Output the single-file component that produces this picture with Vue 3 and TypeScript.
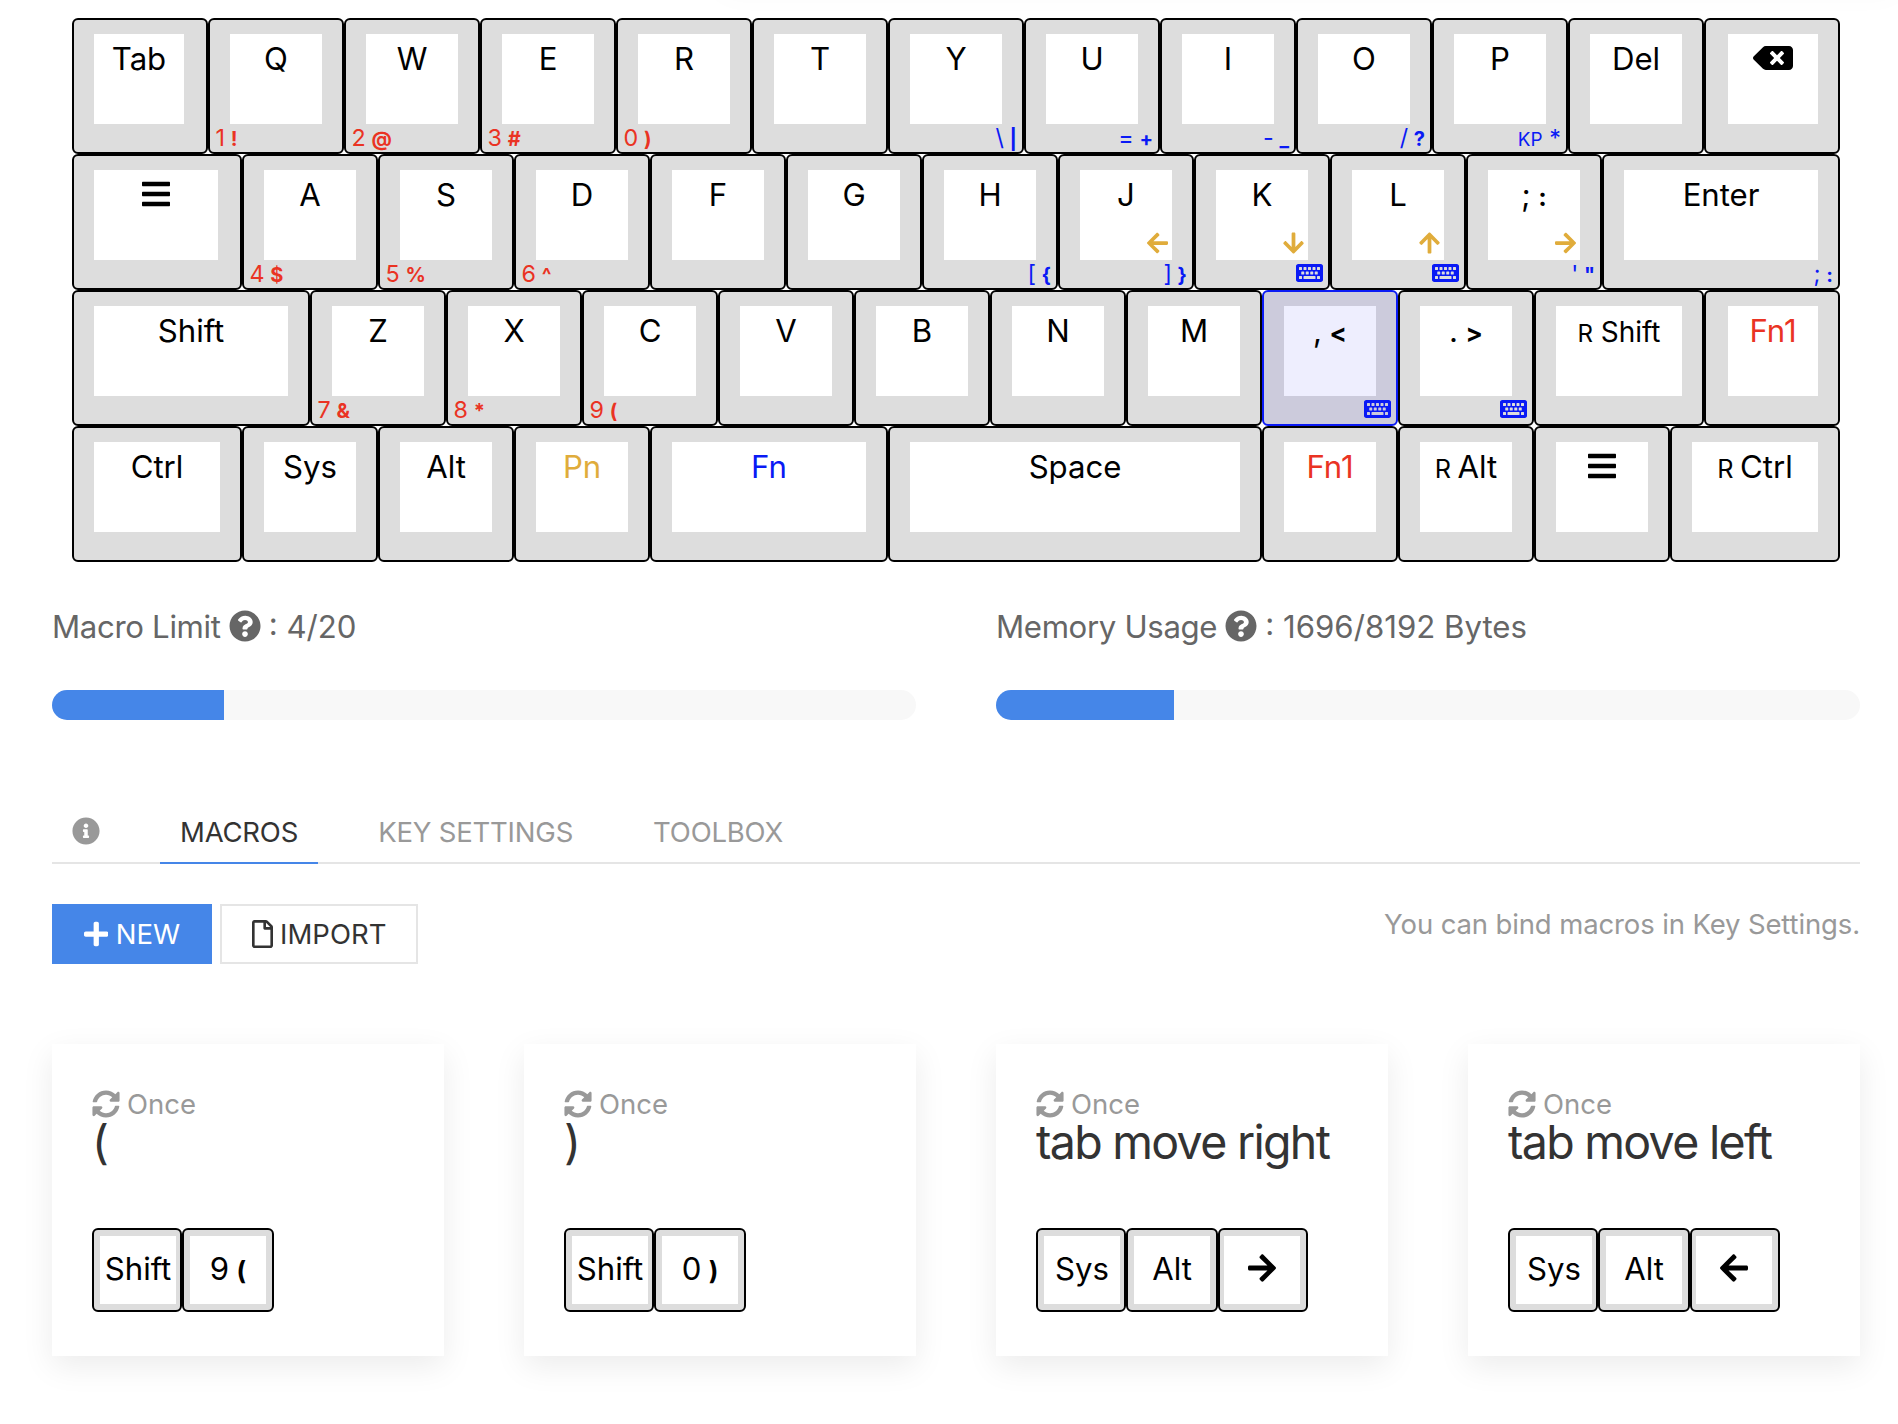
<script setup lang="ts">
interface Icon { w: number; d: string }
interface Legend { t?: string; s?: string; pre?: string; icon?: string; mid?: boolean }
interface Key { u?: number; m: Legend; fn1?: Legend; fn?: Legend; pn?: string; tone?: string; sel?: boolean; edge?: string }

const block = (x: number, y: number, w: number) =>
  `M${x + 12} ${y}a12 12 0 0 0-12 12v40a12 12 0 0 0 12 12h${w - 24}a12 12 0 0 0 12-12v-40a12 12 0 0 0-12-12z`

const keyboardPath =
  'M528 448H48c-26.51 0-48-21.49-48-48V112c0-26.51 21.49-48 48-48h480c26.51 0 48 21.49 48 48v288c0 26.51-21.49 48-48 48z' +
  [64, 160, 256, 352, 448].map(x => block(x, 128, 64)).join('') +
  [112, 208, 304, 400].map(x => block(x, 224, 64)).join('') +
  block(64, 320, 64) + block(160, 320, 256) + block(448, 320, 64)

const icons: Record<string, Icon> = {
  left: { w: 448, d: 'M257.5 445.1l-22.2 22.2c-9.4 9.4-24.6 9.4-33.9 0L7 273c-9.4-9.4-9.4-24.6 0-33.9L201.4 44.7c9.4-9.4 24.6-9.4 33.9 0l22.2 22.2c9.5 9.5 9.3 25-.4 34.3L136.6 216H424c13.3 0 24 10.7 24 24v32c0 13.3-10.7 24-24 24H136.6l120.5 114.8c9.8 9.3 10 24.8.4 34.3z' },
  right: { w: 448, d: 'M190.5 66.9l22.2-22.2c9.4-9.4 24.6-9.4 33.9 0L441 239c9.4 9.4 9.4 24.6 0 33.9L246.6 467.3c-9.4 9.4-24.6 9.4-33.9 0l-22.2-22.2c-9.5-9.5-9.3-25 .4-34.3L311.4 296H24c-13.3 0-24-10.7-24-24v-32c0-13.3 10.7-24 24-24h287.4L190.9 101.2c-9.8-9.3-10-24.8-.4-34.3z' },
  up: { w: 448, d: 'M34.9 289.5l-22.2-22.2c-9.4-9.4-9.4-24.6 0-33.9L207 39c9.4-9.4 24.6-9.4 33.9 0l194.3 194.3c9.4 9.4 9.4 24.6 0 33.9L413 289.4c-9.5 9.5-25 9.3-34.3-.4L264 168.6V456c0 13.3-10.7 24-24 24h-32c-13.3 0-24-10.7-24-24V168.6L69.2 289.1c-9.3 9.8-24.8 10-34.3.4z' },
  down: { w: 448, d: 'M413.1 222.5l22.2 22.2c9.4 9.4 9.4 24.6 0 33.9L241 473c-9.4 9.4-24.6 9.4-33.9 0L12.7 278.6c-9.4-9.4-9.4-24.6 0-33.9l22.2-22.2c9.5-9.4 25-9.3 34.3.4L184 343.4V56c0-13.3 10.7-24 24-24h32c13.3 0 24 10.7 24 24v287.4l114.8-120.5c9.3-9.8 24.8-10 34.3-.4z' },
  bars: { w: 448, d: 'M16 132h416c8.8 0 16-7.2 16-16V76c0-8.8-7.2-16-16-16H16C7.2 60 0 67.2 0 76v40c0 8.8 7.2 16 16 16zm0 160h416c8.8 0 16-7.2 16-16v-40c0-8.8-7.2-16-16-16H16c-8.8 0-16 7.2-16 16v40c0 8.8 7.2 16 16 16zm0 160h416c8.8 0 16-7.2 16-16v-40c0-8.8-7.2-16-16-16H16c-8.8 0-16 7.2-16 16v40c0 8.8 7.2 16 16 16z' },
  backspace: { w: 640, d: 'M576 64H205.26A63.97 63.97 0 0 0 160 82.75L9.37 233.37c-12.5 12.5-12.5 32.76 0 45.25L160 429.25c12 12 28.28 18.75 45.25 18.75H576c35.35 0 64-28.65 64-64V128c0-35.35-28.65-64-64-64zm-84.69 254.06c6.25 6.25 6.25 16.38 0 22.63l-22.62 22.62c-6.25 6.25-16.38 6.25-22.63 0L384 301.25l-62.06 62.06c-6.25 6.25-16.38 6.25-22.63 0l-22.62-22.62c-6.25-6.25-6.25-16.38 0-22.63L338.75 256l-62.06-62.06c-6.25-6.25-6.25-16.38 0-22.63l22.62-22.62c6.25-6.25 16.38-6.25 22.63 0L384 210.75l62.06-62.06c6.25-6.25 16.38-6.25 22.63 0l22.62 22.62c6.25 6.25 6.25 16.38 0 22.63L429.25 256l62.06 62.06z' },
  keyboard: { w: 576, d: keyboardPath },
  question: { w: 512, d: 'M504 256c0 136.997-111.043 248-248 248S8 392.997 8 256C8 119.083 119.043 8 256 8s248 111.083 248 248zM262.655 90c-54.497 0-89.255 22.957-116.549 63.758-3.536 5.286-2.353 12.415 2.715 16.258l34.699 26.31c5.205 3.947 12.621 3.008 16.665-2.122 17.864-22.658 30.113-35.797 57.303-35.797 20.429 0 45.698 13.148 45.698 32.958 0 14.976-12.363 22.667-32.534 33.976C247.128 238.528 216 254.941 216 296v4c0 6.627 5.373 12 12 12h56c6.627 0 12-5.373 12-12v-1.333c0-28.462 83.186-29.647 83.186-106.667 0-58.002-60.165-102-116.531-102zM256 338c-25.365 0-46 20.635-46 46 0 25.364 20.635 46 46 46s46-20.636 46-46c0-25.365-20.635-46-46-46z' },
  info: { w: 512, d: 'M256 8C119.043 8 8 119.083 8 256c0 136.997 111.043 248 248 248s248-111.003 248-248C504 119.083 392.957 8 256 8zm0 110c23.196 0 42 18.804 42 42s-18.804 42-42 42-42-18.804-42-42 18.804-42 42-42zm56 254c0 6.627-5.373 12-12 12h-88c-6.627 0-12-5.373-12-12v-24c0-6.627 5.373-12 12-12h12v-64h-12c-6.627 0-12-5.373-12-12v-24c0-6.627 5.373-12 12-12h64c6.627 0 12 5.373 12 12v100h12c6.627 0 12 5.373 12 12v24z' },
  sync: { w: 512, d: 'M370.72 133.28C339.458 104.008 298.888 87.962 255.848 88c-77.458.068-144.328 53.178-162.791 126.85-1.344 5.363-6.122 9.15-11.651 9.15H24.103c-7.498 0-13.194-6.807-11.807-14.176C33.933 94.924 134.813 8 256 8c66.448 0 126.791 26.136 171.315 68.685L463.03 40.97C478.149 25.851 504 36.559 504 57.941V192c0 13.255-10.745 24-24 24H345.941c-21.382 0-32.09-25.851-16.971-40.971l41.75-41.749zM32 296h134.059c21.382 0 32.09 25.851 16.971 40.971l-41.75 41.75c31.262 29.273 71.835 45.319 114.876 45.28 77.418-.07 144.315-53.144 162.787-126.849 1.344-5.363 6.122-9.15 11.651-9.15h57.304c7.498 0 13.194 6.807 11.807 14.176C478.067 417.076 377.187 504 256 504c-66.448 0-126.791-26.136-171.315-68.685L48.97 471.03C33.851 486.149 8 475.441 8 454.059V320c0-13.255 10.745-24 24-24z' },
  plus: { w: 448, d: 'M416 208H272V64c0-17.67-14.33-32-32-32h-32c-17.67 0-32 14.33-32 32v144H32c-17.67 0-32 14.33-32 32v32c0 17.67 14.33 32 32 32h144v144c0 17.67 14.33 32 32 32h32c17.67 0 32-14.33 32-32V304h144c17.67 0 32-14.33 32-32v-32c0-17.67-14.33-32-32-32z' },
  file: { w: 384, d: 'M369.9 97.9L286 14C277 5 264.8-.1 252.1-.1H48C21.5 0 0 21.5 0 48v416c0 26.5 21.5 48 48 48h288c26.5 0 48-21.5 48-48V131.9c0-12.7-5.1-25-14.1-34zM332.1 128H256V51.9l76.1 76.1zM48 464V48h160v104c0 13.3 10.7 24 24 24h104v288H48z' },
}

const rows: Key[][] = [
  [
    { m: { t: 'Tab' }, edge: 'first' },
    { m: { t: 'Q' }, fn1: { t: '1', s: '!' } },
    { m: { t: 'W' }, fn1: { t: '2', s: '@' } },
    { m: { t: 'E' }, fn1: { t: '3', s: '#' } },
    { m: { t: 'R' }, fn1: { t: '0', s: ')' } },
    { m: { t: 'T' } },
    { m: { t: 'Y' }, fn: { t: '\\', s: '|' } },
    { m: { t: 'U' }, fn: { t: '=', s: '+' } },
    { m: { t: 'I' }, fn: { t: '-', s: '_' } },
    { m: { t: 'O' }, fn: { t: '/', s: '?' } },
    { m: { t: 'P' }, fn: { pre: 'KP', t: '*' } },
    { m: { t: 'Del' } },
    { m: { icon: 'backspace' }, edge: 'last' },
  ],
  [
    { u: 1.25, m: { icon: 'bars' }, edge: 'first' },
    { m: { t: 'A' }, fn1: { t: '4', s: '$' } },
    { m: { t: 'S' }, fn1: { t: '5', s: '%' } },
    { m: { t: 'D' }, fn1: { t: '6', s: '^' } },
    { m: { t: 'F' } },
    { m: { t: 'G' } },
    { m: { t: 'H' }, fn: { t: '[', s: '{' } },
    { m: { t: 'J' }, fn: { t: ']', s: '}' }, pn: 'left' },
    { m: { t: 'K' }, fn: { icon: 'keyboard' }, pn: 'down' },
    { m: { t: 'L' }, fn: { icon: 'keyboard' }, pn: 'up' },
    { m: { t: ';', s: ':' }, fn: { t: '\'', s: '"' }, pn: 'right' },
    { u: 1.75, m: { t: 'Enter' }, fn: { t: ';', s: ':' } },
  ],
  [
    { u: 1.75, m: { t: 'Shift' } },
    { m: { t: 'Z' }, fn1: { t: '7', s: '&' } },
    { m: { t: 'X' }, fn1: { t: '8', s: '*' } },
    { m: { t: 'C' }, fn1: { t: '9', s: '(' } },
    { m: { t: 'V' } },
    { m: { t: 'B' } },
    { m: { t: 'N' } },
    { m: { t: 'M' } },
    { m: { t: ',', s: '<' }, fn: { icon: 'keyboard' }, sel: true },
    { m: { t: '.', s: '>' }, fn: { icon: 'keyboard' } },
    { u: 1.25, m: { pre: 'R', t: 'Shift', mid: true } },
    { m: { t: 'Fn1' }, tone: 'red', edge: 'last' },
  ],
  [
    { u: 1.25, m: { t: 'Ctrl' } },
    { m: { t: 'Sys' } },
    { m: { t: 'Alt' } },
    { m: { t: 'Pn' }, tone: 'gold' },
    { u: 1.75, m: { t: 'Fn' }, tone: 'blue' },
    { u: 2.75, m: { t: 'Space' } },
    { m: { t: 'Fn1' }, tone: 'red' },
    { m: { pre: 'R', t: 'Alt' } },
    { m: { icon: 'bars' } },
    { u: 1.25, m: { pre: 'R', t: 'Ctrl' } },
  ],
]

const meters = [
  { label: 'Macro Limit', value: ': 4/20', pct: 19.9 },
  { label: 'Memory Usage', value: ': 1696/8192 Bytes', pct: 20.6 },
]

const tabs = ['MACROS', 'KEY SETTINGS', 'TOOLBOX']

const macros: { name: string; keys: Legend[] }[] = [
  { name: '(', keys: [{ t: 'Shift' }, { t: '9', s: '(' }] },
  { name: ')', keys: [{ t: 'Shift' }, { t: '0', s: ')' }] },
  { name: 'tab move right', keys: [{ t: 'Sys' }, { t: 'Alt' }, { icon: 'right' }] },
  { name: 'tab move left', keys: [{ t: 'Sys' }, { t: 'Alt' }, { icon: 'left' }] },
]
</script>

<template>
  <div class="page">
    <div class="top-shade"></div>
    <div class="keyboard">
      <div v-for="(row, r) in rows" :key="r" class="row">
        <div
          v-for="(k, i) in row"
          :key="i"
          class="key"
          :class="[k.tone, k.edge, { sel: k.sel }]"
          :style="{ width: (k.u ?? 1) * 136 + 'px' }"
        >
          <div class="cap" :class="{ mid: k.m.mid }">
            <svg v-if="k.m.icon" class="icon i32" :viewBox="`0 0 ${icons[k.m.icon].w} 512`"><path :d="icons[k.m.icon].d" /></svg>
            <span v-else><small v-if="k.m.pre">{{ k.m.pre }}&nbsp;</small>{{ k.m.t }}<b v-if="k.m.s">&nbsp;{{ k.m.s }}</b></span>
          </div>
          <div v-if="k.fn1" class="sub sub-l">{{ k.fn1.t }}<b>&nbsp;{{ k.fn1.s }}</b></div>
          <div v-if="k.fn" class="sub sub-r" :class="{ ic: k.fn.icon }">
            <svg v-if="k.fn.icon" class="icon i24" :viewBox="`0 0 ${icons[k.fn.icon].w} 512`"><path fill-rule="evenodd" :d="icons[k.fn.icon].d" /></svg>
            <template v-else><small v-if="k.fn.pre">{{ k.fn.pre }}&nbsp;</small>{{ k.fn.t }}<b v-if="k.fn.s">&nbsp;{{ k.fn.s }}</b></template>
          </div>
          <svg v-if="k.pn" class="icon i24 pn" :viewBox="`0 0 ${icons[k.pn].w} 512`"><path :d="icons[k.pn].d" /></svg>
        </div>
      </div>
    </div>

    <div class="meters">
      <div v-for="m in meters" :key="m.label" class="meter">
        <div class="meter-label">
          <span class="what">{{ m.label }}</span>
          <svg class="icon i32" viewBox="0 0 512 512"><path :d="icons.question.d" /></svg>
          <span>{{ m.value }}</span>
        </div>
        <div class="bar"><div class="fill" :style="{ width: m.pct + '%' }"></div></div>
      </div>
    </div>

    <div class="tabs">
      <div class="tab info"><svg class="icon i28" viewBox="0 0 512 512"><path :d="icons.info.d" /></svg></div>
      <div v-for="(t, i) in tabs" :key="t" class="tab" :class="{ active: i === 0 }">{{ t }}</div>
    </div>

    <div class="toolbar">
      <button class="btn primary"><svg class="icon i28" viewBox="0 0 448 512"><path :d="icons.plus.d" /></svg><span>NEW</span></button>
      <button class="btn"><svg class="icon i28" viewBox="0 0 384 512"><path :d="icons.file.d" /></svg><span>IMPORT</span></button>
      <div class="hint">You can bind macros in Key Settings.</div>
    </div>

    <div class="cards">
      <div v-for="c in macros" :key="c.name" class="card">
        <div class="mode"><svg class="icon i28" viewBox="0 0 512 512"><path :d="icons.sync.d" /></svg><span>Once</span></div>
        <div class="name">{{ c.name }}</div>
        <div class="combo">
          <div v-for="(k, i) in c.keys" :key="i" class="mini" :class="'m' + i">
            <div class="mini-cap">
              <svg v-if="k.icon" class="icon i32" :viewBox="`0 0 ${icons[k.icon].w} 512`"><path :d="icons[k.icon].d" /></svg>
              <span v-else>{{ k.t }}<b v-if="k.s">&nbsp;{{ k.s }}</b></span>
            </div>
          </div>
        </div>
      </div>
    </div>
  </div>
</template>

<style>
body {
  background: #fff;
}
</style>

<style scoped>
.page {
  position: relative;
  box-sizing: border-box;
  width: 1898px;
  height: 1424px;
  padding: 18px 38px 0 52px;
  overflow: hidden;
  background: #fff;
  color: #333;
  font-family: Inter, "Liberation Sans", sans-serif;
}
.top-shade {
  position: absolute;
  top: -20px;
  left: 720px;
  right: 0;
  height: 10px;
  box-shadow: 0 0 30px rgba(0, 0, 0, 0.06);
}
.icon {
  display: block;
  flex: none;
  fill: currentColor;
}
.i32 { height: 32px; }
.i28 { height: 28px; }
.i24 { height: 24px; }

.keyboard {
  width: 1768px;
  margin-left: 20px;
}
.row {
  display: flex;
}
.key {
  position: relative;
  display: flex;
  flex: none;
  box-sizing: border-box;
  height: 136px;
  padding: 14px 20px 28px;
  border: 2px solid #000;
  border-radius: 6px;
  background: #ddd;
  color: #000;
}
.first { padding-right: 22px; }
.last { padding-left: 22px; }
.cap {
  flex: 1;
  display: flex;
  justify-content: center;
  height: 90px;
  background: #fff;
  font-size: 31.2px;
  line-height: 51px;
  letter-spacing: -0.05px;
  white-space: nowrap;
}
.cap .icon {
  margin-top: 8px;
}
.mid {
  font-size: 28px;
  line-height: 52px;
}
small {
  margin-right: -0.5px;
  font-size: 0.81em;
  line-height: 1;
}
.sub small {
  margin-right: 1.5px;
}
.mid small {
  margin-right: 1px;
  font-size: 0.86em;
}
b {
  margin-left: 1.5px;
  font-size: 0.82em;
  font-weight: 700;
  line-height: 1;
}
.sub b {
  margin-left: 1px;
  font-size: 0.86em;
}
.red .cap { color: #ea3323; }
.gold .cap { color: #e0ac3b; }
.blue .cap { color: #0a1af5; }
.sel {
  border-color: #0a1af5;
  background: #cccbdc;
}
.sel .cap {
  background: #eeeefe;
}
.sub {
  position: absolute;
  bottom: 0;
  font-size: 23.3px;
  line-height: 28px;
  white-space: nowrap;
}
.sub-l {
  left: 5.5px;
  color: #ea3323;
}
.sub-r {
  right: 5px;
  color: #0a1af5;
}
.sub.ic {
  bottom: 3px;
}
.pn {
  position: absolute;
  top: 75px;
  right: 24px;
  color: #e0ac3b;
}

.meters {
  display: flex;
  gap: 80px;
  margin-top: 40px;
}
.meter {
  width: 864px;
}
.meter-label {
  display: flex;
  align-items: center;
  gap: 8px;
  height: 48px;
  color: #666;
  font-size: 31.2px;
  line-height: 48px;
  white-space: nowrap;
}
.meter-label span {
  padding-top: 2px;
}
.what {
  letter-spacing: -0.35px;
}
.bar {
  height: 30px;
  margin-top: 40px;
  overflow: hidden;
  border-radius: 15px;
  background: #f8f8f8;
}
.fill {
  height: 100%;
  background: #4586e8;
}

.tabs {
  display: flex;
  gap: 40px;
  height: 60px;
  margin-top: 82px;
  border-bottom: 2px solid #e5e5e5;
  color: #999;
  font-size: 27.5px;
  line-height: 60px;
  letter-spacing: -0.2px;
}
.tab {
  box-sizing: border-box;
  height: 62px;
  padding: 0 20px;
  white-space: nowrap;
}
.tab.info {
  padding-top: 15px;
}
.active {
  border-bottom: 2px solid #4586e8;
  color: #333;
}

.toolbar {
  display: flex;
  gap: 8px;
  margin-top: 40px;
}
.btn {
  display: flex;
  align-items: center;
  justify-content: center;
  gap: 7.5px;
  box-sizing: border-box;
  width: 198px;
  height: 60px;
  padding: 0;
  border: 2px solid #e5e5e5;
  background: #fff;
  color: #333;
  font: inherit;
  font-size: 27.5px;
}
.primary {
  width: 160px;
  border-color: #4586e8;
  background: #4586e8;
  color: #fff;
}
.hint {
  margin-left: auto;
  color: #999;
  font-size: 27.5px;
  line-height: 40px;
  letter-spacing: -0.13px;
}

.cards {
  display: flex;
  gap: 80px;
  margin-top: 80px;
}
.card {
  box-sizing: border-box;
  width: 392px;
  height: 312px;
  padding: 40px;
  background: #fff;
  box-shadow: 0 10px 30px rgba(0, 0, 0, 0.08);
}
.mode {
  display: flex;
  align-items: center;
  gap: 7px;
  height: 40px;
  color: #999;
  font-size: 27.5px;
  line-height: 40px;
}
.name {
  height: 56px;
  font-size: 46.5px;
  line-height: 36px;
  letter-spacing: -1.7px;
  white-space: nowrap;
}
.combo {
  display: flex;
  margin-top: 48px;
}
.mini {
  display: flex;
  box-sizing: border-box;
  width: 90px;
  height: 84px;
  padding: 6px 4px 6px 6px;
  border: 2px solid #000;
  border-radius: 6px;
  background: #ddd;
  color: #000;
}
.m1 {
  width: 92px;
  padding-right: 6px;
}
.m2 {
  padding: 6px 6px 6px 4px;
}
.mini-cap {
  display: flex;
  flex: 1;
  justify-content: center;
  background: #fff;
  font-size: 31.2px;
  line-height: 67px;
  letter-spacing: -0.05px;
  white-space: nowrap;
}
.mini-cap .icon {
  margin-top: 16px;
}
</style>
